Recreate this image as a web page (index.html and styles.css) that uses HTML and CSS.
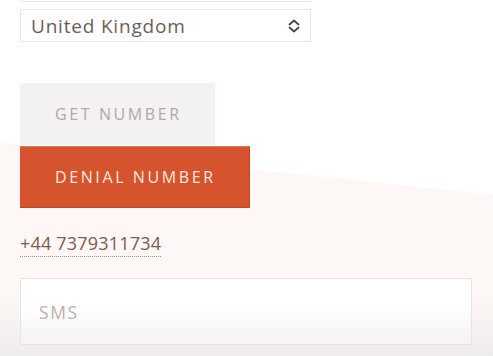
FILE: index.html
```html
<!DOCTYPE html>
<html lang="en">
<head>
<meta charset="utf-8">
<title>Get number</title>
<link rel="stylesheet" href="styles.css">
</head>
<body>
<div class="page">
  <div class="content">
    <div class="prev-field"></div>
    <div class="select">
      <span class="select-value">United Kingdom</span>
      <svg class="select-arrows" width="12" height="14" viewBox="0 0 12 14" aria-hidden="true">
        <polyline points="1.5,5.5 6,1.5 10.5,5.5" fill="none" stroke="#4a4342" stroke-width="1.7" stroke-linecap="round" stroke-linejoin="round"/>
        <polyline points="1.5,8.5 6,12.5 10.5,8.5" fill="none" stroke="#4a4342" stroke-width="1.7" stroke-linecap="round" stroke-linejoin="round"/>
      </svg>
    </div>
    <div class="buttons">
      <button class="btn btn-get">GET NUMBER</button>
      <button class="btn btn-deny">DENIAL NUMBER</button>
    </div>
    <div class="phone-row"><span class="phone">+44 7379311734</span></div>
    <div class="sms">SMS</div>
  </div>
</div>
</body>
</html>
```
FILE: styles.css
```css
html, body {
  margin: 0;
  padding: 0;
}
body {
  font-family: "Open Sans", "Liberation Sans", sans-serif;
}
.page {
  min-height: 356px;
  height: 100vh;
  overflow: hidden;
  background:
    linear-gradient(180deg, rgba(238,236,235,0) 0, rgba(238,236,235,0) 300px, rgba(238,236,235,1) 356px),
    linear-gradient(186deg, #ffffff 0, #ffffff 193px, #fdf7f5 194px, #fdf7f5 100%);
}
.content {
  padding-left: 20px;
  width: 452px;
}
.prev-field {
  width: 289px;
  height: 1px;
  border: 1px solid #ebe7e6;
  border-top: none;
}
.select {
  margin-top: 7px;
  height: 31px;
  width: 269px;
  border: 1px solid #e9e5e4;
  background: #fff;
  display: flex;
  align-items: center;
  justify-content: space-between;
  padding: 0 10px;
}
.select-value {
  font-size: 19px;
  color: #6c5d5a;
  letter-spacing: 0.8px;
}
.select-arrows {
  display: block;
}
.buttons {
  margin-top: 41px;
  display: flex;
  flex-direction: column;
  align-items: flex-start;
}
.btn {
  font-family: inherit;
  border: none;
  height: 62px;
  margin: 0;
  padding: 0 33px 0 35px;
  font-size: 16px;
  letter-spacing: 2.6px;
  cursor: pointer;
  box-sizing: border-box;
}
.btn-get {
  background: #f3f1f1;
  color: #b4a7a5;
}
.btn-deny {
  margin-top: 1px;
  background: #d5532d;
  color: #f8e8e0;
  border-top: 1px solid #e07a5c;
  border-right: 1px solid #b9482a;
  border-bottom: 1px solid #b9482a;
}
.phone-row {
  margin-top: 23px;
  height: 24px;
}
.phone {
  font-size: 18px;
  color: #7d5b52;
  letter-spacing: 0.2px;
  border-bottom: 1.5px dotted #9a8f8c;
  padding-bottom: 1px;
}
.sms {
  margin-top: 23px;
  width: 416px;
  height: 65px;
  border: 1px solid #e8e4e3;
  background: linear-gradient(180deg, #ffffff 0, #ffffff 40%, #f5f3f3 100%);
  display: flex;
  align-items: center;
  padding-left: 18px;
  padding-right: 16px;
  font-size: 17.5px;
  color: #bfaeab;
  letter-spacing: 1.6px;
}
```
